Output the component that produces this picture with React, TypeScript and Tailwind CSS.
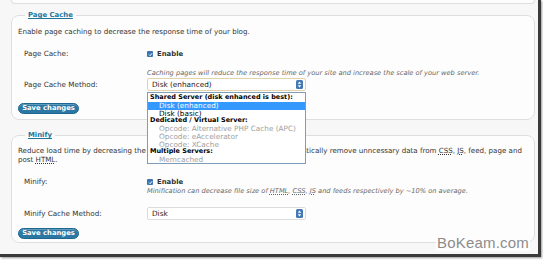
import React from "react";

function Check() {
  return (
    <span className="inline-flex w-[6px] h-[6px] items-center justify-center rounded-[1px] bg-[#3d74b0] mr-[4px]">
      <svg width="5" height="5" viewBox="0 0 10 10">
        <path d="M2 5.2 L4.2 7.4 L8.2 2.6" stroke="#fff" strokeWidth="2" fill="none" />
      </svg>
    </span>
  );
}

function SelectBox({ value, focused }: { value: string; focused?: boolean }) {
  return (
    <div
      className={
        "w-[159px] h-[13px] bg-white flex items-center justify-between pl-[4px] pr-[2px] rounded-[2px] border " +
        (focused ? "border-[#e2d3a8]" : "border-[#dcdcdc]")
      }
    >
      <span className="text-[7.3px] leading-[11px] text-[#222]">{value}</span>
      <span className="w-[7px] h-[9px] rounded-[1.5px] bg-[#4478b4] flex items-center justify-center">
        <svg width="5" height="7" viewBox="0 0 10 14">
          <path d="M5 1 L8.5 5.5 L1.5 5.5 Z" fill="#fff" />
          <path d="M5 13 L8.5 8.5 L1.5 8.5 Z" fill="#fff" />
        </svg>
      </span>
    </div>
  );
}

function SaveButton() {
  return (
    <button className="h-[11px] w-[61px] rounded-full bg-[#2b78a4] border border-[#1f6690] text-white font-bold text-[6.8px] leading-[9px] flex items-center justify-center shadow-[inset_0_1px_0_rgba(255,255,255,0.25)]">
      Save changes
    </button>
  );
}

function Legend({ children }: { children: React.ReactNode }) {
  return (
    <legend className="ml-[7px] px-[3px] text-[6.9px] leading-[10px] font-bold text-[#21759b] underline">
      {children}
    </legend>
  );
}

const U = ({ children }: { children: React.ReactNode }) => (
  <span className="underline decoration-dotted">{children}</span>
);

export default function App() {
  return (
    <div className="relative w-[543px] h-[260px] bg-white overflow-hidden font-['DejaVu_Sans',sans-serif] text-[#333]">
      <div className="w-[541px] h-[257px] bg-[#f7f7f7] border-r-[3px] border-b-[3px] border-[#3a3a3a] pl-[11px] pr-[3px] shadow-[1px_1px_2px_rgba(0,0,0,0.4)]">
        <div className="w-[524px] h-[4px] bg-[#fdfdfd] border-x border-b border-[#dedede] rounded-b-[7px]" />

        {/* Page Cache */}
        <fieldset className="relative mt-[6px] w-[524px] h-[110px] bg-[#fdfdfd] border border-[#dedede] rounded-[8px] px-[6px]">
          <Legend>Page Cache</Legend>
          <div className="mt-[7px] text-[7.1px] leading-[10px]">
            Enable page caching to decrease the response time of your blog.
          </div>
          <div className="mt-[12px] flex">
            <div className="w-[123px] ml-[6px] text-[7.2px] leading-[10px]">Page Cache:</div>
            <div className="flex flex-col">
              <div className="flex items-center text-[6.9px] leading-[10px] font-bold">
                <Check />
                Enable
              </div>
              <div className="mt-[9px] text-[6.65px] leading-[10px] italic text-[#666]">
                Caching pages will reduce the response time of your site and increase the scale of your web server.
              </div>
            </div>
          </div>
          <div className="mt-[0px] flex items-center">
            <div className="w-[123px] ml-[6px] text-[7.2px] leading-[10px]">Page Cache Method:</div>
            <SelectBox value="Disk (enhanced)" focused />
          </div>
          <div className="mt-[12px]">
            <SaveButton />
          </div>
        </fieldset>

        {/* Minify */}
        <fieldset className="relative mt-[10px] w-[524px] h-[113px] bg-[#fdfdfd] border border-[#dedede] rounded-[8px] px-[6px]">
          <Legend>Minify</Legend>
          <div className="mt-[7px] w-[508px] text-[7.1px] leading-[8.5px]">
            Reduce load time by decreasing the size and number of <U>CSS</U> and <U>JS</U> files. Automatically
            remove unncessary data from <U>CSS</U>, <U>JS</U>, feed, page and post <U>HTML</U>.
          </div>
          <div className="mt-[13px] flex">
            <div className="w-[123px] ml-[6px] text-[7.2px] leading-[10px]">Minify:</div>
            <div className="flex flex-col">
              <div className="flex items-center text-[6.9px] leading-[10px] font-bold">
                <Check />
                Enable
              </div>
              <div className="-mt-[1px] text-[6.65px] leading-[10px] italic text-[#666]">
                Minification can decrease file size of <U>HTML</U>, <U>CSS</U>, <U>JS</U> and feeds respectively by
                ~10% on average.
              </div>
            </div>
          </div>
          <div className="mt-[11px] flex items-center">
            <div className="w-[123px] ml-[6px] text-[7.2px] leading-[10px]">Minify Cache Method:</div>
            <SelectBox value="Disk" />
          </div>
          <div className="mt-[8px]">
            <SaveButton />
          </div>
          <div className="absolute right-[4px] bottom-[-9px] px-[1px] bg-[#fdfdfd] font-['Liberation_Sans',sans-serif] text-[15px] leading-[16px] text-[#8c8c8c] tracking-[0.2px]">
            BoKeam.com
          </div>
        </fieldset>
      </div>

      {/* open dropdown list */}
      <div className="absolute left-[147px] top-[92px] w-[159px] h-[72px] bg-white border border-[#7f9db9] leading-[7.75px] pt-[1px]">
        <div className="pl-[2px] font-bold text-black text-[6.5px]">Shared Server (disk enhanced is best):</div>
        <div className="pl-[11px] bg-[#3399ff] text-white text-[7.3px]">Disk (enhanced)</div>
        <div className="pl-[11px] text-black text-[7.3px]">Disk (basic)</div>
        <div className="pl-[2px] font-bold text-black text-[6.5px]">Dedicated / Virtual Server:</div>
        <div className="pl-[11px] text-[#a0a0a0] text-[7.3px]">Opcode: Alternative PHP Cache (APC)</div>
        <div className="pl-[11px] text-[#a0a0a0] text-[7.3px]">Opcode: eAccelerator</div>
        <div className="pl-[11px] text-[#a0a0a0] text-[7.3px]">Opcode: XCache</div>
        <div className="pl-[2px] font-bold text-black text-[6.5px]">Multiple Servers:</div>
        <div className="pl-[11px] text-[#a0a0a0] text-[7.3px]">Memcached</div>
      </div>
    </div>
  );
}
